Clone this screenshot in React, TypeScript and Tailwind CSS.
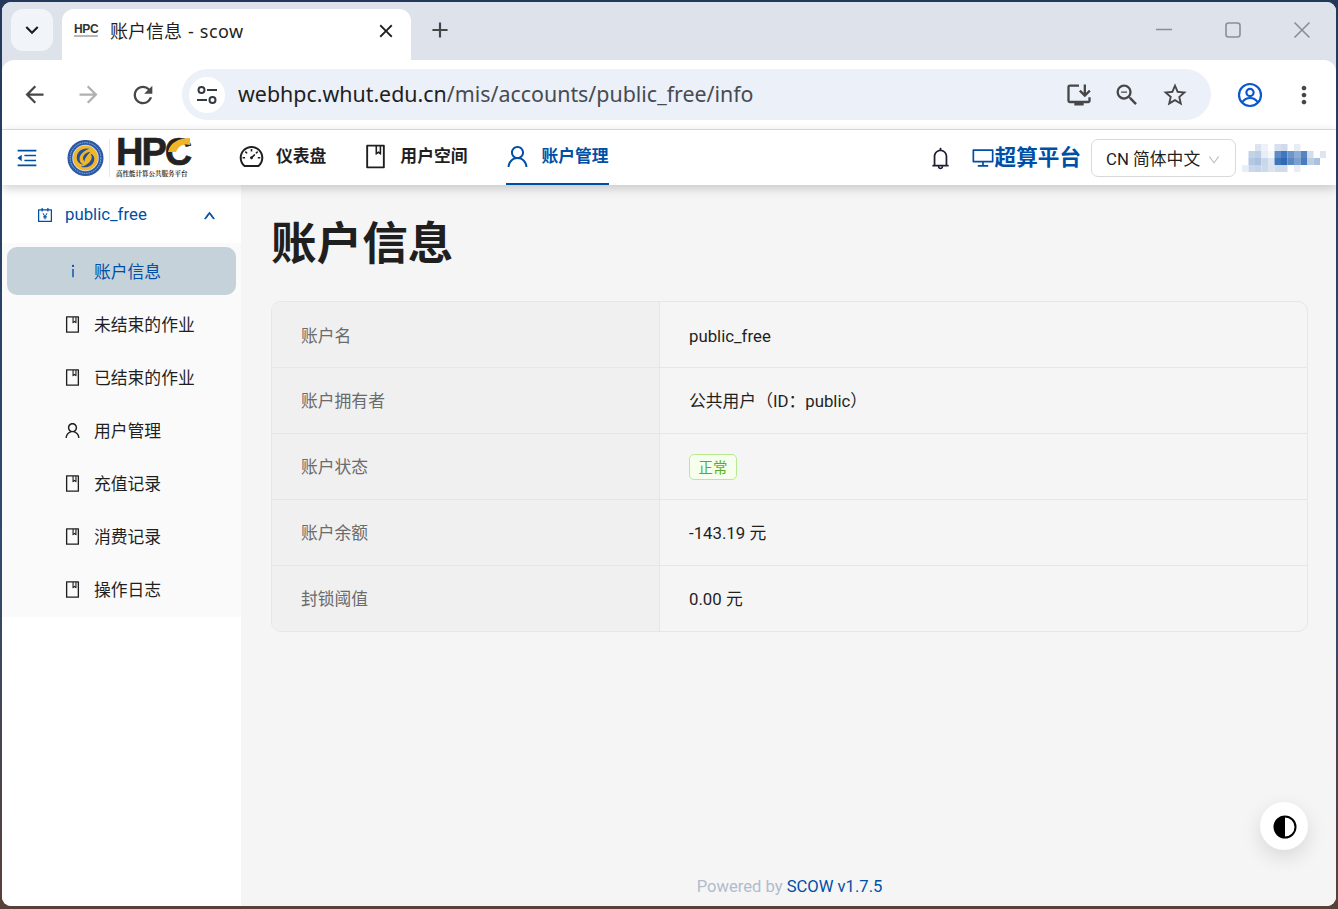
import React from "react";
import {
  AiOutlineAccountBook,
  AiOutlineBell,
  AiOutlineBook,
  AiOutlineDashboard,
  AiOutlineDesktop,
  AiOutlineDown,
  AiOutlineInfo,
  AiOutlineMenuFold,
  AiOutlineUp,
  AiOutlineUser,
} from "react-icons/ai";
import { MdArrowBack, MdArrowForward, MdClose, MdInstallDesktop, MdMoreVert, MdOutlineStarBorder, MdRefresh, MdZoomOut, MdAdd, MdKeyboardArrowDown } from "react-icons/md";

const FONT = "font-['Roboto','Noto_Sans_CJK_SC',sans-serif]";

function Tune() {
  return (
    <svg width="24" height="24" viewBox="0 0 24 24" fill="none" stroke="#333a44" strokeWidth="2">
      <circle cx="6.5" cy="7" r="3" />
      <path d="M12 7h10M2 17h10" />
      <circle cx="17.5" cy="17" r="3" />
    </svg>
  );
}

function AccountCircle() {
  return (
    <svg width="26" height="26" viewBox="0 0 26 26" fill="none" stroke="#0b57d0" strokeWidth="2.2">
      <circle cx="13" cy="13" r="11" />
      <circle cx="13" cy="10.5" r="3.6" />
      <path d="M5.5 20c2-3 4.8-4 7.5-4s5.500 1 7.500 4" />
    </svg>
  );
}

function Logo() {
  return (
    <div className="flex items-center ml-[28px] w-[123px] shrink-0">
      <svg width="37" height="38" viewBox="0 0 38 38" className="shrink-0">
        <circle cx="19" cy="19" r="18.500" fill="#2a5aa6" />
        <circle cx="19" cy="19" r="15.800" fill="none" stroke="#9db7da" strokeWidth="1" strokeDasharray="1.500 1" />
        <circle cx="19" cy="19" r="13.600" fill="#d9e3ef" />
        <circle cx="19" cy="19" r="12.800" fill="#efb62c" />
        <path d="M23 9.500c-7-1.500-13 3-13 9 0 4 3 7 7 7.500-3-1.500-4.500-4-4-7 .5-4 4.500-7.500 10-9.500z" fill="#23509c" />
        <path d="M24 12.500c-4 .5-7 3-7.500 6-.3 1.500.3 3 1.500 4 0-3 2-5.500 6-10z" fill="#23509c" />
        <path d="M14 28c6 2 13-1 14-7 .5-3-1-5.500-4-6.500 1.500 2 1.800 4 .8 6-1.500 3.500-5.500 6.500-10.800 7.500z" fill="#23509c" />
      </svg>
      <div className="w-px h-[38px] bg-[#e8e8e8] ml-[5px] shrink-0" />
      <div className="ml-[6px] flex flex-col">
        <div className="relative h-[29px] leading-[29px] text-[38px] font-bold text-[#222222] tracking-[-2px] font-['Liberation_Sans',sans-serif] whitespace-nowrap [-webkit-text-stroke:0.6px_#222222]">
          HPC
          <svg width="24" height="16" viewBox="0 0 24 16" className="absolute left-[51px] -top-[1px]">
            <path d="M1 15C3 6 11 1 23 1v7c-6-1.500-11 0-14 7z" fill="#f0b428" />
          </svg>
        </div>
        <div className="mt-[2px] text-[6.500px] leading-[9px] font-bold text-[#333333] whitespace-nowrap font-['Noto_Serif_CJK_SC','Noto_Sans_CJK_SC',serif]">
          高性能计算公共服务平台
        </div>
      </div>
    </div>
  );
}

function Mosaic() {
  const cells: [number, number, string][] = [
    [2, 0, "#dbe4f0"], [3, 0, "#eef2f8"], [5, 0, "#d6e0ee"], [6, 0, "#cfdbeb"], [8, 0, "#e8edf5"],
    [1, 1, "#c2d2e8"], [2, 1, "#bccde6"], [3, 1, "#e9eef6"], [4, 1, "#f5f7fa"], [5, 1, "#5f8cc6"], [6, 1, "#4178bd"], [7, 1, "#6d96c9"], [8, 1, "#8cacd6"], [9, 1, "#5584c0"], [10, 1, "#d2deee"], [12, 1, "#dce5f1"],
    [1, 2, "#b4c8e3"], [2, 2, "#aac1df"], [3, 2, "#c8d7ea"], [4, 2, "#dee6f1"], [5, 2, "#3e76bb"], [6, 2, "#2f6ab3"], [7, 2, "#5a88c3"], [8, 2, "#78a0d0"], [9, 2, "#4b7dbc"], [10, 2, "#bccde4"], [11, 2, "#a9c0de"],
    [0, 3, "#e8eef6"], [1, 3, "#c9d7ea"], [2, 3, "#c5d4e8"], [3, 3, "#cbd9eb"], [4, 3, "#dbe4f0"], [5, 3, "#d0dcec"], [6, 3, "#cfdbeb"], [8, 3, "#e9eef6"],
  ];
  return (
    <svg width="84" height="30" viewBox="0 0 84 30" className="shrink-0 ml-[6px] mt-[1px]">
      {cells.map(([x, y, c], i) => (
        <rect key={i} x={x * 6.5} y={y * 7} width="6.5" height="7" fill={c} />
      ))}
    </svg>
  );
}

const NAV = [
  { icon: <AiOutlineDashboard size={27} className="-ml-[2px]" />, label: "仪表盘" },
  { icon: <AiOutlineBook size={27} className="-ml-[2px]" />, label: "用户空间" },
  { icon: <AiOutlineUser size={27} className="-ml-[2px]" />, label: "账户管理", active: true },
];

const MENU = [
  { icon: <AiOutlineInfo size={18} />, label: "账户信息", active: true },
  { icon: <AiOutlineBook size={19} />, label: "未结束的作业" },
  { icon: <AiOutlineBook size={19} />, label: "已结束的作业" },
  { icon: <AiOutlineUser size={19} />, label: "用户管理" },
  { icon: <AiOutlineBook size={19} />, label: "充值记录" },
  { icon: <AiOutlineBook size={19} />, label: "消费记录" },
  { icon: <AiOutlineBook size={19} />, label: "操作日志" },
];

const ROWS: [string, React.ReactNode][] = [
  ["账户名", "public_free"],
  ["账户拥有者", "公共用户（ID：public）"],
  [
    "账户状态",
    <span className="inline-block -mt-[2px] h-[26px] leading-[27px] px-[8.500px] text-[14.400px] rounded-[5px] border border-[#b7eb8f] bg-[#f6ffed] text-[#52b41a]">
      正常
    </span>,
  ],
  ["账户余额", "-143.19 元"],
  ["封锁阈值", "0.00 元"],
];

export default function App() {
  return (
    <div className={`${FONT} w-[1338px] h-[909px] overflow-hidden bg-[linear-gradient(180deg,#22395c_0%,#2f4a6e_60%,#5a4038_100%)] pt-[2px] pl-[2px] pr-[2px] pb-[3px]`}>
      <div className="h-full flex flex-col rounded-[9px] overflow-hidden bg-white">
        {/* tab strip */}
        <div className="h-[58px] shrink-0 bg-[#dee3eb] flex items-start pt-[7px] pl-[9px]">
          <div className="w-[42px] h-[42px] rounded-[12px] bg-[#f1f4f8] flex items-center justify-center text-[#1f1f1f]">
            <MdKeyboardArrowDown size={26} />
          </div>
          <div className="relative ml-[9px] w-[349px] h-[51px] bg-white rounded-t-[12px] flex items-center pl-[12px] pr-[14px] pb-[7px]">
            <div className="w-[24px] flex flex-col items-start -mt-[2px]">
              <span className="text-[12px] leading-[10px] font-bold text-[#333333] tracking-[-0.300px] font-['Liberation_Sans',sans-serif]">HPC</span>
              <span className="mt-[1px] w-[24px] h-[2px] bg-[#b8b8b8]" />
            </div>
            <span className="ml-[12px] text-[18px] text-[#1f1f1f] leading-none whitespace-nowrap font-['Noto_Sans','Noto_Sans_CJK_SC',sans-serif]">
              账户信息<span className="ml-[6px] mr-[6px]">-</span><span className="tracking-[0.500px]">scow</span>
            </span>
            <MdClose size={22} className="ml-auto text-[#1f1f1f]" />
          </div>
          <MdAdd size={26} className="ml-[16px] mt-[8px] text-[#444746]" />
          <div className="ml-auto flex items-center pt-[12px] pr-[25px] text-[#7a7f86]">
            <svg width="18" height="18" viewBox="0 0 18 18" className="mr-[51px]" fill="none" stroke="#8a8f96" strokeWidth="1.600">
              <path d="M1 8.500h16" />
            </svg>
            <svg width="18" height="18" viewBox="0 0 18 18" className="mr-[51px]" fill="none" stroke="#8a8f96" strokeWidth="1.600">
              <rect x="2" y="2" width="14" height="14" rx="2.500" />
            </svg>
            <svg width="18" height="18" viewBox="0 0 18 18" fill="none" stroke="#8a8f96" strokeWidth="1.600">
              <path d="M1.500 1.500l15 15M16.500 1.500l-15 15" />
            </svg>
          </div>
        </div>

        {/* toolbar */}
        <div className="h-[70px] shrink-0 bg-[#dee3eb]">
          <div className="h-full bg-white rounded-t-[12px] border-b border-[#e1e1e1] flex items-center pl-[19px] pr-[12px]">
            <MdArrowBack size={27} className="text-[#474747]" />
            <MdArrowForward size={27} className="ml-[27px] text-[#b0b0b0]" />
            <MdRefresh size={28} className="ml-[27px] text-[#474747]" />
            <div className="ml-[25px] w-[1029px] h-[51px] rounded-full bg-[#ebf0f9] flex items-center pl-[7px] pr-[22px] shrink-0">
              <div className="w-[36px] h-[36px] rounded-full bg-white flex items-center justify-center">
                <Tune />
              </div>
              <span className="ml-[13px] -mt-[1px] text-[21.400px] leading-none text-[#1f1f1f] whitespace-nowrap font-['Noto_Sans',sans-serif]">
                webhpc.whut.edu.cn<span className="text-[#474b52]">/mis/accounts/public_free/info</span>
              </span>
              <div className="ml-auto flex items-center gap-[20px] text-[#474747]">
                <MdInstallDesktop size={28} />
                <MdZoomOut size={28} />
                <MdOutlineStarBorder size={28} />
              </div>
            </div>
            <div className="ml-[26px]"><AccountCircle /></div>
            <MdMoreVert size={28} className="ml-[27px] text-[#474747]" />
          </div>
        </div>

        {/* app header */}
        <header className="relative z-10 h-[55px] shrink-0 bg-white shadow-[0_3px_10px_rgba(0,0,0,0.2)] flex items-center pl-[13px] pr-[10px]">
          <AiOutlineMenuFold size={24} className="text-[#004fa6] shrink-0" />
          <Logo />
          <nav className="flex h-full ml-[50px]">
            {NAV.map((n) => (
              <div
                key={n.label}
                className={`h-full flex items-center mr-[38px] border-b-2 ${n.active ? "border-[#004fa6] text-[#004fa6]" : "border-transparent text-[#1f1f1f]"}`}
              >
                {n.icon}
                <span className="ml-[11px] text-[16.800px] font-bold whitespace-nowrap">{n.label}</span>
              </div>
            ))}
          </nav>
          <div className="ml-auto flex items-center pt-[1px]">
            <AiOutlineBell size={25} className="text-[#1f1f2f]" />
            <AiOutlineDesktop size={24} className="ml-[18px] text-[#004fa6]" />
            <span className="text-[21.600px] font-bold text-[#004fa6] leading-none whitespace-nowrap">超算平台</span>
            <div className="ml-[10px] w-[145px] h-[38px] rounded-[7px] border border-[#d9d9d9] flex items-center pl-[14px] pr-[14px] pt-[3px] text-[16.800px] text-[#1f1f1f]">
              <span className="whitespace-nowrap">CN 简体中文</span>
              <AiOutlineDown size={14} className="ml-auto text-[#bfbfbf]" />
            </div>
            <Mosaic />
          </div>
        </header>

        <div className="flex-1 flex min-h-0">
          {/* sidebar */}
          <aside className="w-[239px] shrink-0 bg-white">
            <div className="h-[58px] flex items-center pl-[34px] pr-[25px] pt-[2px] text-[#004fa6]">
              <AiOutlineAccountBook size={18} />
              <span className="ml-[11px] text-[16.800px]">public_free</span>
              <AiOutlineUp size={13} stroke="currentColor" strokeWidth={70} className="ml-auto" />
            </div>
            <div className="bg-[#fafafa] h-[374px] px-[5px] pt-[4px]">
              {MENU.map((m) => (
                <div
                  key={m.label}
                  className={`h-[48px] mb-[5px] rounded-[10px] flex items-center pl-[56px] ${m.active ? "bg-[#c5d2da] text-[#004fa6]" : "text-[#1f1f1f]"}`}
                >
                  <span className="w-[19px] flex justify-center shrink-0">{m.icon}</span>
                  <span className="ml-[12px] mt-[4px] text-[16.800px] whitespace-nowrap">{m.label}</span>
                </div>
              ))}
            </div>
          </aside>

          {/* main */}
          <main className="flex-1 bg-[#f5f5f5] flex flex-col pl-[30px] pr-[28px] relative">
            <h1 className="mt-[29px] text-[45.600px] leading-[62px] font-bold text-[#1f1f1f] whitespace-nowrap">账户信息</h1>
            <div className="mt-[25px] border border-[#e6e6e6] rounded-[10px] overflow-hidden">
              {ROWS.map(([k, v], i) => (
                <div key={k} className={`flex ${i > 0 ? "h-[66px] border-t border-[#e6e6e6]" : "h-[65px]"}`}>
                  <div className={`w-[388px] shrink-0 bg-[#f0f0f0] border-r border-[#e6e6e6] flex items-center pl-[29px] text-[16.800px] text-[#6b6b6b] ${i === 0 ? "pt-[4px]" : "pt-[2px]"}`}>
                    {k}
                  </div>
                  <div className={`flex-1 flex items-center pl-[29px] text-[16.800px] text-[#1f1f1f] ${i === 0 ? "pt-[4px]" : "pt-[2px]"}`}>{v}</div>
                </div>
              ))}
            </div>
            <footer className="mt-auto pb-[6px] text-center text-[16.600px] text-[#b0bccc]">
              Powered by <span className="text-[#004fa6]">SCOW v1.7.5</span>
            </footer>
            <button className="absolute right-[28px] bottom-[56px] w-[48px] h-[48px] rounded-full bg-white shadow-[0_7px_20px_rgba(0,0,0,0.12)] flex items-center justify-center">
              <svg width="24" height="24" viewBox="0 0 24 24" className="ml-[1px] mt-[1px]">
                <circle cx="12" cy="12" r="10.500" fill="none" stroke="#000" strokeWidth="2" />
                <path d="M12 1.500a10.500 10.500 0 000 21z" fill="#000" />
              </svg>
            </button>
          </main>
        </div>
      </div>
    </div>
  );
}
